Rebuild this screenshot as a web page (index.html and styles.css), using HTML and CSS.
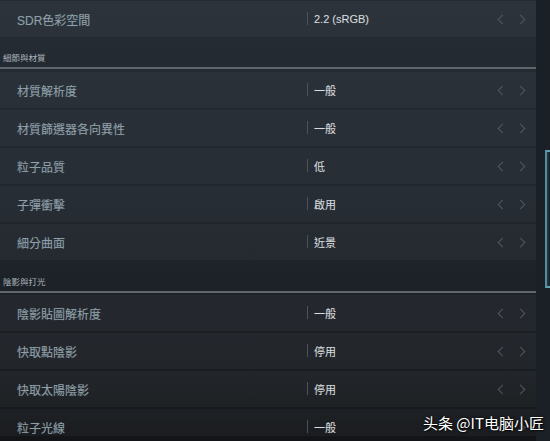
FILE: index.html
```html
<!DOCTYPE html>
<html lang="zh-Hant">
<head>
<meta charset="utf-8">
<title>圖形設定</title>
<link rel="stylesheet" href="styles.css">
</head>
<body>
<div class="screen">
  <div class="settings">
    <div class="row first">
      <span class="label">SDR色彩空間</span>
      <span class="value">2.2 (sRGB)</span>
      <span class="arrows"><i class="chev left"></i><i class="chev right"></i></span>
    </div>

    <div class="section s1">
      <span class="section-title">細節與材質</span>
      <div class="rule"></div>
    </div>
    <div class="row">
      <span class="label">材質解析度</span>
      <span class="value">一般</span>
      <span class="arrows"><i class="chev left"></i><i class="chev right"></i></span>
    </div>
    <div class="row">
      <span class="label">材質篩選器各向異性</span>
      <span class="value">一般</span>
      <span class="arrows"><i class="chev left"></i><i class="chev right"></i></span>
    </div>
    <div class="row">
      <span class="label">粒子品質</span>
      <span class="value">低</span>
      <span class="arrows"><i class="chev left"></i><i class="chev right"></i></span>
    </div>
    <div class="row">
      <span class="label">子彈衝擊</span>
      <span class="value">啟用</span>
      <span class="arrows"><i class="chev left"></i><i class="chev right"></i></span>
    </div>
    <div class="row">
      <span class="label">細分曲面</span>
      <span class="value">近景</span>
      <span class="arrows"><i class="chev left"></i><i class="chev right"></i></span>
    </div>

    <div class="section s2">
      <span class="section-title">陰影與打光</span>
      <div class="rule"></div>
    </div>
    <div class="row">
      <span class="label">陰影貼圖解析度</span>
      <span class="value">一般</span>
      <span class="arrows"><i class="chev left"></i><i class="chev right"></i></span>
    </div>
    <div class="row">
      <span class="label">快取點陰影</span>
      <span class="value">停用</span>
      <span class="arrows"><i class="chev left"></i><i class="chev right"></i></span>
    </div>
    <div class="row">
      <span class="label">快取太陽陰影</span>
      <span class="value">停用</span>
      <span class="arrows"><i class="chev left"></i><i class="chev right"></i></span>
    </div>
    <div class="row">
      <span class="label">粒子光線</span>
      <span class="value">一般</span>
      <span class="arrows"><i class="chev left"></i><i class="chev right"></i></span>
    </div>
  </div>

  <div class="scrollbar">
    <div class="thumb"></div>
  </div>

  <div class="watermark">头条 @IT电脑小匠</div>
</div>
</body>
</html>
```

FILE: styles.css
```css
* { box-sizing: border-box; }

html, body {
  margin: 0;
  padding: 0;
  background: #101215;
}

.screen {
  position: relative;
  width: 550px;
  height: 441px;
  overflow: hidden;
  display: flex;
  background: linear-gradient(180deg, #252c34 0%, #20262d 45%, #1a1e23 85%, #121417 100%);
  font-family: "Liberation Sans", "Noto Sans CJK TC", sans-serif;
}

.settings {
  width: 536px;
  height: 436px;
  overflow: hidden;
  padding-top: 1px;
  display: flex;
  flex-direction: column;
  flex: none;
}

.row {
  flex: none;
  height: 36px;
  margin-bottom: 2px;
  display: flex;
  align-items: center;
  background: rgba(255, 255, 255, 0.035);
}

.label {
  width: 307px;
  padding-left: 17px;
  font-size: 12px;
  color: #8d9fa8;
  white-space: nowrap;
}

.label, .value {
  text-shadow: 0 0 1px rgba(141, 159, 168, 0.35);
}

.value {
  flex: 1;
  position: relative;
  padding-left: 7px;
  font-size: 11px;
  color: #d6dadc;
}

.value::before {
  content: "";
  position: absolute;
  left: 0;
  top: 50%;
  width: 1px;
  height: 13px;
  margin-top: -7px;
  background: #4a525a;
}

.arrows {
  width: 40px;
  display: flex;
  gap: 11px;
  padding-left: 2px;
}

.chev {
  display: block;
  width: 7px;
  height: 7px;
  border-top: 1px solid #4d5862;
  border-left: 1px solid #4d5862;
}

.chev.left { transform: rotate(-45deg); margin-left: 1px; }
.chev.right { transform: rotate(135deg); }

.section {
  flex: none;
  display: flex;
  flex-direction: column;
}

.s1 { padding-top: 14px; margin-bottom: 3px; }
.s2 { padding-top: 15px; margin-bottom: 2px; }

.section-title {
  padding-left: 3px;
  font-size: 8.5px;
  line-height: 11px;
  color: #a9b3b8;
}

.rule {
  margin-top: 3px;
  height: 2px;
  background: #5f676d;
}

.scrollbar {
  flex: 1;
  position: relative;
  background: #1b2026;
}

.thumb {
  position: absolute;
  left: 9px;
  right: 0;
  top: 150px;
  height: 138px;
  border-left: 2px solid #4f8fa0;
  border-top: 2px solid #5fa3b3;
  border-bottom: 2px solid #5fa3b3;
  background: linear-gradient(90deg, rgba(79, 143, 160, 0.25), rgba(79, 143, 160, 0));
}

.watermark {
  position: absolute;
  left: 423px;
  top: 412px;
  font-family: "Noto Sans CJK SC", sans-serif;
  font-size: 15px;
  color: #ffffff;
  text-shadow: 0 0 3px rgba(0, 0, 0, 0.8), 1px 1px 1px rgba(0, 0, 0, 0.6);
  white-space: nowrap;
}
```
